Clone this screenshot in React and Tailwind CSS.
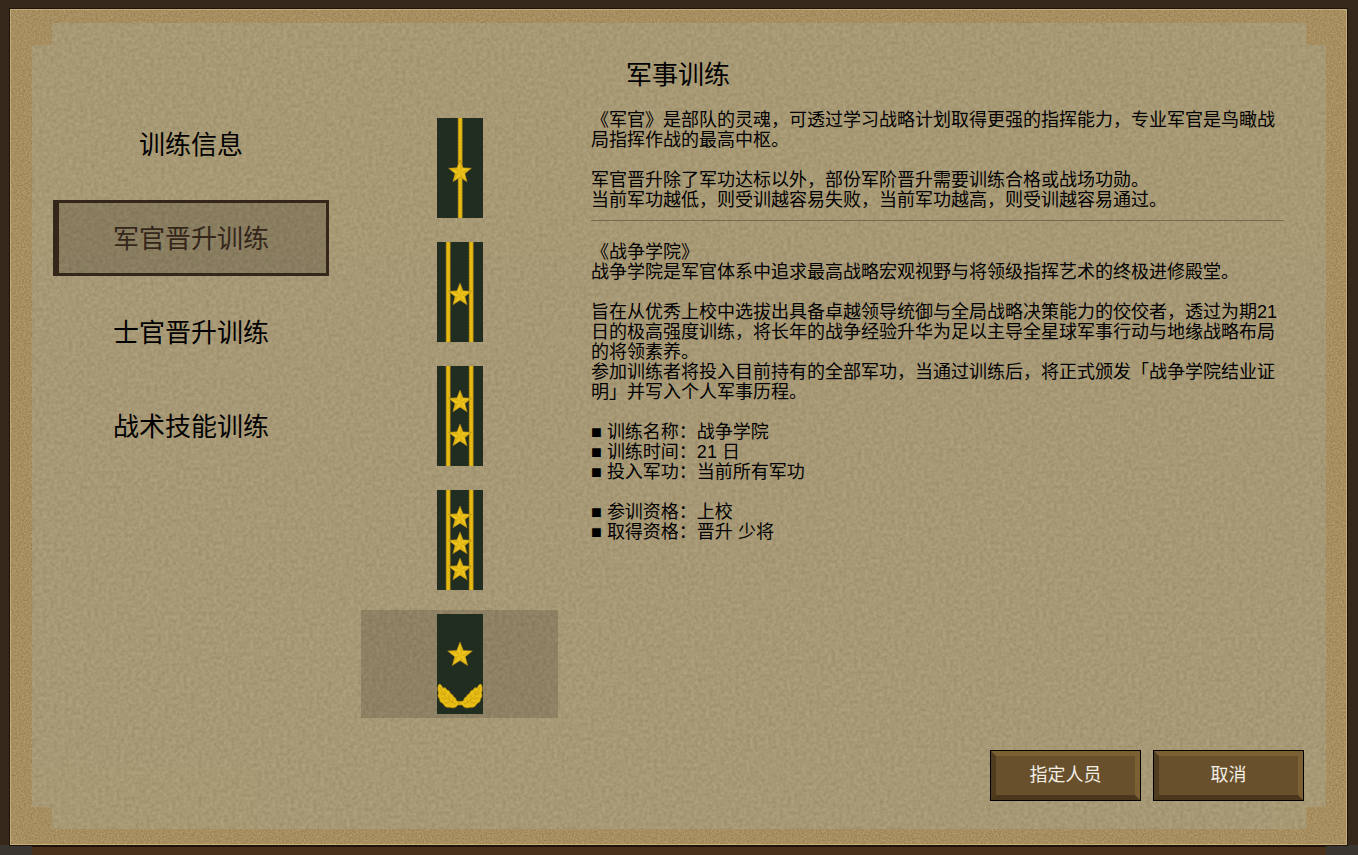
import React, { useState } from "react";
import clsx from "clsx";

const menu = ["训练信息", "军官晋升训练", "士官晋升训练", "战术技能训练"];

const ranks = [
  { name: "少校", bars: [21], stars: [54], size: 12 },
  { name: "中校", bars: [9, 32], stars: [53], size: 12 },
  { name: "上校", bars: [9, 32], stars: [36, 70], size: 12 },
  { name: "大校", bars: [9, 32], stars: [28, 54, 80], size: 12 },
  { name: "少将", bars: [], stars: [41], size: 13, wreath: true },
];

const intro = `《军官》是部队的灵魂，可透过学习战略计划取得更强的指挥能力，专业军官是鸟瞰战局指挥作战的最高中枢。

军官晋升除了军功达标以外，部份军阶晋升需要训练合格或战场功勋。
当前军功越低，则受训越容易失败，当前军功越高，则受训越容易通过。`;

const detail = `《战争学院》
战争学院是军官体系中追求最高战略宏观视野与将领级指挥艺术的终极进修殿堂。

旨在从优秀上校中选拔出具备卓越领导统御与全局战略决策能力的佼佼者，透过为期21日的极高强度训练，将长年的战争经验升华为足以主导全星球军事行动与地缘战略布局的将领素养。
参加训练者将投入目前持有的全部军功，当通过训练后，将正式颁发「战争学院结业证明」并写入个人军事历程。`;

const facts = [
  ["训练名称：战争学院", "训练时间：21 日", "投入军功：当前所有军功"],
  ["参训资格：上校", "取得资格：晋升 少将"],
];

function starPoint(cy, r, i) {
  const a = ((i * 36 - 90) * Math.PI) / 180;
  const d = i % 2 ? r * 0.43 : r;
  return [23 + d * Math.cos(a), cy + d * Math.sin(a)];
}

function Star({ cy, r }) {
  const pts = Array.from({ length: 10 }, (_, i) => starPoint(cy, r, i));
  return (
    <g>
      <polygon points={pts.join(" ")} fill="#efc71c" stroke="#a58216" strokeWidth="0.6" />
      {pts.map((p, i) => {
        // shade one side of every arm
        if (i % 2) return null;
        const next = pts[i + 1];
        return <polygon key={i} points={`23,${cy} ${p} ${next}`} fill="#cfa10c" opacity="0.5" />;
      })}
    </g>
  );
}

function Wing() {
  return (
    <g>
      <path
        d="M2 70 C4 70 5 72 6 74 C8 73 9 74 10 76 C12 76 13 78 14 80 C16 80 16 82 17 83 C19 83 19 86 20 87 L24 87.5 L24 91 L21 91 C19 94 16 94.5 13 93.5 C9 94 7 92 6 89.5 C4 89 2 87 2.5 85 C0.5 83 0.5 81 1.5 79 C0 76 0.5 72 2 70 Z"
        fill="#e8bd14"
        stroke="#94740f"
        strokeWidth="0.5"
      />
      <path
        d="M3 73 C6 81 11 87 19 90 M3 79 L6 81 M4 84 L9 85 M8 89 L13 88 M8 77 L8 81 M12 81 L12 86 M16 85 L15 89"
        fill="none"
        stroke="#c4960c"
        strokeWidth="0.6"
      />
    </g>
  );
}

function Insignia({ rank }) {
  return (
    <svg width="46" height="100" viewBox="0 0 46 100" aria-hidden="true">
      <rect width="46" height="100" fill="#222d22" />
      {rank.bars.map((x) => (
        <g key={x}>
          <rect x={x - 0.2} width="4.8" height="100" fill="#a07e12" />
          <rect x={x + 0.6} width="3.2" height="100" fill="#e8bd14" />
          <path d={`M${x + 2.2} 0V100`} stroke="#d5aa12" strokeWidth="3" strokeDasharray="0.5 2.5" />
        </g>
      ))}
      {rank.stars.map((cy) => (
        <Star key={cy} cy={cy} r={rank.size} />
      ))}
      {rank.wreath && (
        <>
          <Wing />
          <g transform="translate(46 0) scale(-1 1)">
            <Wing />
          </g>
        </>
      )}
    </svg>
  );
}

function Grain({ id, frequency, opacity }) {
  return (
    <svg className="pointer-events-none absolute inset-0 h-full w-full" style={{ opacity }} aria-hidden="true">
      <filter id={id} colorInterpolationFilters="sRGB">
        <feTurbulence type="fractalNoise" baseFrequency={frequency} numOctaves="3" seed="4" />
        <feColorMatrix values="1.6 0 0 0 -0.2  1.6 0 0 0 -0.25  1.6 0 0 0 -0.3  0 0 0 0 1" />
      </filter>
      <rect width="100%" height="100%" filter={`url(#${id})`} />
    </svg>
  );
}

function ActionButton({ children }) {
  return (
    <button
      type="button"
      className="h-[51px] w-[151px] cursor-pointer border border-black bg-[#68502c] text-[18px] text-[#f3eee6]"
    >
      <span className="flex h-full items-center justify-center border-[5px] border-t-[#7c6033] border-r-[#7c6033] border-b-[#4a371c] border-l-[#503d20]">
        {children}
      </span>
    </button>
  );
}

export default function App() {
  const [active, setActive] = useState(1);
  const [rank, setRank] = useState(4);

  return (
    <div
      lang="zh-CN"
      className="flex min-h-screen flex-col bg-[#35271a] pt-[9px] font-['Liberation_Sans','Noto_Sans_CJK_SC',sans-serif] text-black"
    >
      <div className="relative mr-[11px] ml-[10px] flex flex-1 flex-col border border-[#c5ad78] bg-[#a98f5c] pt-[13px] pr-5 pb-[15px] pl-[21px] outline outline-[#1d130b]">
        <Grain id="edge-grain" frequency="0.6" opacity={0.12} />
        <main className="relative flex flex-1 flex-col bg-[#a99a75] pt-[34px] pr-[22px] pb-7 pl-[21px] [clip-path:polygon(20px_0,calc(100%-20px)_0,calc(100%-20px)_22px,100%_22px,100%_calc(100%-22px),calc(100%-20px)_calc(100%-22px),calc(100%-20px)_100%,20px_100%,20px_calc(100%-22px),0_calc(100%-22px),0_22px,20px_22px)]">
          <Grain id="paper-grain" frequency="0.27" opacity={0.07} />
          <div className="relative flex flex-1">
            <nav className="mt-[49px] flex w-[276px] shrink-0 flex-col gap-[18px]">
              {menu.map((label, i) => (
                <button
                  key={label}
                  type="button"
                  onClick={() => setActive(i)}
                  aria-current={active === i ? "page" : undefined}
                  className={clsx(
                    "h-[76px] cursor-pointer border-3 pt-0.5 text-[26px]",
                    active === i ? "border-l-6 border-[#35261a] bg-black/18 pr-[3px] text-[#35261a]" : "border-transparent"
                  )}
                >
                  {label}
                </button>
              ))}
            </nav>

            <div className="mt-[57px] ml-8 flex w-[197px] shrink-0 flex-col gap-4">
              {ranks.map((item, i) => (
                <button
                  key={item.name}
                  type="button"
                  onClick={() => setRank(i)}
                  aria-label={item.name}
                  aria-pressed={rank === i}
                  className={clsx("flex h-[108px] cursor-pointer items-center justify-center", rank === i && "bg-black/15")}
                >
                  <Insignia rank={item} />
                </button>
              ))}
            </div>

            <section className="mr-[21px] ml-[33px] flex-1 text-[18px] leading-5">
              <h1 className="pl-[35px] text-[26px] leading-9">军事训练</h1>
              <p className="mt-[17px] whitespace-pre-line">{intro}</p>
              <hr className="mt-2.5 mb-[21px] border-[#766a4e]" />
              <p className="whitespace-pre-line">{detail}</p>
              {facts.map((group, i) => (
                <ul key={i} className="mt-5">
                  {group.map((fact) => (
                    <li key={fact}>■ {fact}</li>
                  ))}
                </ul>
              ))}
            </section>
          </div>

          <div className="relative flex justify-end gap-3">
            <ActionButton>指定人员</ActionButton>
            <ActionButton>取消</ActionButton>
          </div>
        </main>
      </div>
      <div className="flex h-[10px]">
        <div className="w-8 bg-[#393630]" />
        <div className="flex-1 border-t-2 border-[#1d130b] bg-[#49301a]" />
        <div className="w-8 bg-[#393630]" />
      </div>
    </div>
  );
}
